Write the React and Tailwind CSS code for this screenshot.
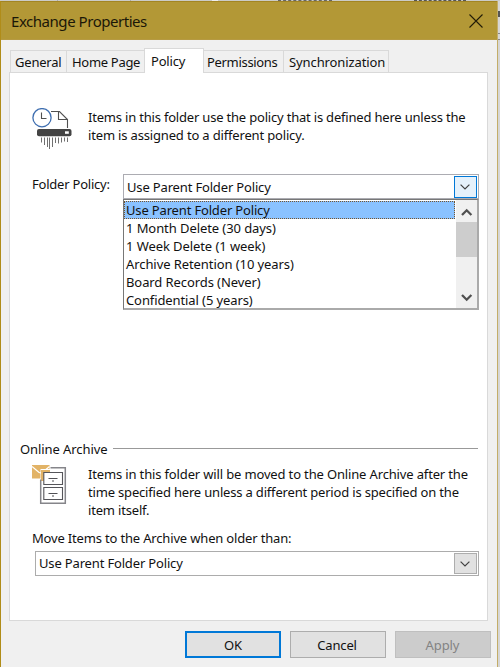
import React from "react";

const policies = [
  { name: "Use Parent Folder Policy", cls: "tracking-[-0.16px]" },
  { name: "1 Month Delete (30 days)", cls: "tracking-[-0.08px]" },
  { name: "1 Week Delete (1 week)", cls: "tracking-[-0.08px]" },
  { name: "Archive Retention (10 years)", cls: "tracking-[-0.08px]" },
  { name: "Board Records (Never)", cls: "tracking-[-0.09px]" },
  { name: "Confidential (5 years)", cls: "tracking-[-0.1px]" },
];

function Chevron() {
  return (
    <svg width="10" height="6" viewBox="0 0 10 6" fill="none" stroke="#404040" strokeWidth="1.2" className="-translate-x-px">
      <path d="M.6.6L5 5 9.400.600" />
    </svg>
  );
}

function ShredderIcon() {
  return (
    <svg width="40" height="42" viewBox="0 0 40 42" fill="none" className="shrink-0">
      <path d="M19 3.500h8.500l8 8V20M26.500 3.500v8H35" stroke="#505050" strokeWidth="1.1" />
      <circle cx="10" cy="9.700" r="9.100" fill="#fff" stroke="#3e6eb0" strokeWidth="1.300" />
      <path d="M9.500 4.500v6h5" stroke="#505050" strokeWidth="1.100" />
      <rect x="5" y="21" width="34.500" height="7.200" rx="2" fill="#444" />
      <rect x="33" y="23.300" width="3.800" height="2.500" fill="#fff" />
      <path d="M9.500 29.500v5M12.500 29.500v7.500M15.500 29.500v9.500M17.500 29.500v11.500M20.500 29.500v9.500M23.500 29.500v5.500M26.500 29.500v6M29.500 29.500v5M32.500 29.500v4M35.500 29.500v4.500" stroke="#707070" strokeWidth="1" />
    </svg>
  );
}

function CabinetIcon() {
  return (
    <svg width="36" height="40" viewBox="0 0 36 40" fill="none" className="shrink-0">
      <path d="M0 0h17.500v4H8.500v9.500H0z" fill="#e2b366" />
      <path d="M0 1.500l6.800 5.800q1.900 1.300 3.800 0L17.500 1.500" stroke="#fff" strokeWidth="1.200" />
      <path d="M9 5h9v3h-6v8H9z" fill="#e2b366" />
      <path d="M18.500 2.700h14.800v35.500H8.700V14.500" stroke="#85858a" strokeWidth="1.500" />
      <path d="M11.800 7.500h18.700v12H11.800zM11.800 22.500h18.700v12H11.800z" fill="#fff" stroke="#55555a" strokeWidth="1.100" />
      <path d="M16.500 13.500h9M16.500 28.500h9M20 16h2M20 31h2" stroke="#505055" strokeWidth="1.100" />
    </svg>
  );
}

function Tab({ children, className }) {
  return <div className={"flex h-[22px] items-center border border-b-0 border-[#d9d9d9] bg-[#f0f0f0] pt-px " + className}>{children}</div>;
}

export default function App() {
  return (
    <div className="flex h-[667px] w-[500px] flex-col overflow-hidden bg-[#d8d8d6] font-['Noto_Sans','Open_Sans',sans-serif] text-[13px] leading-[18px] text-[#111] whitespace-nowrap">
      <div className="flex h-px shrink-0 items-stretch bg-[#cbcbc7]">
        <div className="ml-[57px] w-px bg-[#aaa]" />
        <div className="ml-[72px] w-px bg-[#aaa]" />
        <div className="ml-[81px] w-[6px] bg-[#eee]" />
        <div className="ml-[60px] w-[54px] border-t border-dashed border-[#666]" />
        <div className="ml-[82px] w-[52px] border-t border-dashed border-[#555]" />
      </div>
      <div className="flex h-[666px]">
        <div className="flex w-[498px] flex-col border-r border-l border-l-[#b08c18] border-r-[#c3ad68] bg-[#f0f0f0]">
          <header className="flex h-[39px] shrink-0 items-center justify-between border-t border-b border-t-[#a38522] border-b-[#b69a42] bg-[#b39836] pr-[14px] pl-[10px]">
            <h1 className="text-[15px] tracking-[-0.46px] text-[#1b1708]">Exchange Properties</h1>
            <svg width="14" height="14" viewBox="0 0 14 14" stroke="#211c08" strokeWidth="1.100"><path d="M.5.5l13 13M13.500.500l-13 13" /></svg>
          </header>

          <nav className="z-10 mt-[8px] ml-[9px] flex h-[25px] shrink-0 items-end">
            <Tab className="mb-px w-[57px] pl-[4px] tracking-[-0.2px]">General</Tab>
            <Tab className="mb-px w-[77px] border-l-0 border-r-0 pl-[5px] tracking-[-0.3px]">Home Page</Tab>
            <div className="flex h-[25px] w-[60px] items-center border border-b-0 border-[#d9d9d9] bg-white pl-[6px] pb-px tracking-[-0.2px]">Policy</div>
            <Tab className="mb-px w-[80px] border-l-0 pl-[3px] tracking-[-0.32px]">Permissions</Tab>
            <Tab className="mb-px w-[105px] border-l-0 pl-[5px] tracking-[-0.1px]">Synchronization</Tab>
          </nav>

          <main className="-mt-px ml-[8px] flex h-[549px] w-[479px] shrink-0 flex-col border border-[#d9d9d9] bg-white">
            <section className="mt-[35px] ml-[22px] flex h-[42px]">
              <ShredderIcon />
              <p className="ml-[16px]">
                <span className="block tracking-[-0.195px]">Items in this folder use the policy that is defined here unless the</span>
                <span className="block tracking-[-0.165px]">item is assigned to a different policy.</span>
              </p>
            </section>

            <section className="mt-[24px] ml-[22px] flex h-[136px] items-start">
              <label className="mt-px w-[91px] shrink-0 tracking-[-0.22px]">Folder Policy:</label>
              <div className="w-[356px]">
                <div className="flex h-[25px] items-center justify-between border border-[#acacb2] pr-px pl-[3px]">
                  <span className="tracking-[-0.16px]">Use Parent Folder Policy</span>
                  <div className="flex h-[22px] w-[23px] items-center justify-center border border-[#0078d7] bg-[#e5f1fb]"><Chevron /></div>
                </div>
                <div className="flex h-[111px] border border-r-2 border-b-2 border-[#777] border-r-[#aaa] border-b-[#aaa]">
                  <ul className="w-[331px] pt-px">
                    {policies.map((p, i) => (
                      <li key={p.name} className={"flex h-[18px] items-center pl-[2px] " + (i === 0 ? "bg-[#8ac2ff] outline-1 -outline-offset-1 outline-dotted outline-[#76552f]" : "")}>
                        <span className={p.cls}>{p.name}</span>
                      </li>
                    ))}
                  </ul>
                  <div className="ml-px flex h-[108px] w-[21px] flex-col items-center bg-[#f0f0f0]">
                    <svg width="21" height="22" viewBox="0 0 21 22" fill="none" stroke="#505050" strokeWidth="2.300"><path d="M6 15l4.700-4.700L15.400 15" /></svg>
                    <div className="h-[35px] w-[21px] bg-[#cdcdcd]" />
                    <svg className="mt-auto" width="21" height="22" viewBox="0 0 21 22" fill="none" stroke="#505050" strokeWidth="2.300"><path d="M6 9l4.700 4.700L15.400 9" /></svg>
                  </div>
                </div>
              </div>
            </section>

            <section className="mt-[130px] ml-[10px] w-[458px]">
              <div className="flex h-[18px] items-center gap-[5px]">
                <h2 className="tracking-[-0.08px]">Online Archive</h2>
                <div className="-mt-px h-px flex-1 bg-[#999]" />
              </div>
              <div className="mt-[7px] ml-[12px] flex h-[54px]">
                <CabinetIcon />
                <p className="ml-[20px]">
                  <span className="block tracking-[-0.15px]">Items in this folder will be moved to the Online Archive after the</span>
                  <span className="block tracking-[-0.18px]">time specified here unless a different period is specified on the</span>
                  <span className="block tracking-[-0.18px]">item itself.</span>
                </p>
              </div>
              <p className="mt-[10px] ml-[12px] tracking-[-0.17px]">Move Items to the Archive when older than:</p>
              <div className="mt-[4px] ml-[15px] flex h-[25px] w-[444px] items-center justify-between border border-[#acacac] pr-px pl-[3px]">
                <span className="-translate-y-px tracking-[-0.16px]">Use Parent Folder Policy</span>
                <div className="flex h-[21px] w-[23px] items-center justify-center border border-[#adadad] bg-[#e1e1e1]"><Chevron /></div>
              </div>
            </section>
          </main>

          <footer className="mt-[10px] ml-[184px] flex h-[27px] gap-[9px]">
            <button className="w-[96px] border-2 border-[#0078d7] bg-[#e1e1e1] tracking-[-0.1px]">OK</button>
            <button className="w-[96px] border border-[#adadad] bg-[#e1e1e1] pr-[2px] tracking-[-0.15px]">Cancel</button>
            <button className="w-[96px] border border-[#bfbfbf] bg-[#cccccc] pr-px tracking-[-0.1px] text-[#838383]">Apply</button>
          </footer>
        </div>
        <div className="flex w-[2px] flex-col bg-[#d6d6d6]">
          <div className="mt-[10px] h-[6px] w-[2px] bg-[#555]" />
          <div className="mt-[16px] h-px w-[2px] bg-[#888]" />
          <div className="mt-[5px] h-px w-[2px] bg-[#888]" />
        </div>
      </div>
    </div>
  );
}
